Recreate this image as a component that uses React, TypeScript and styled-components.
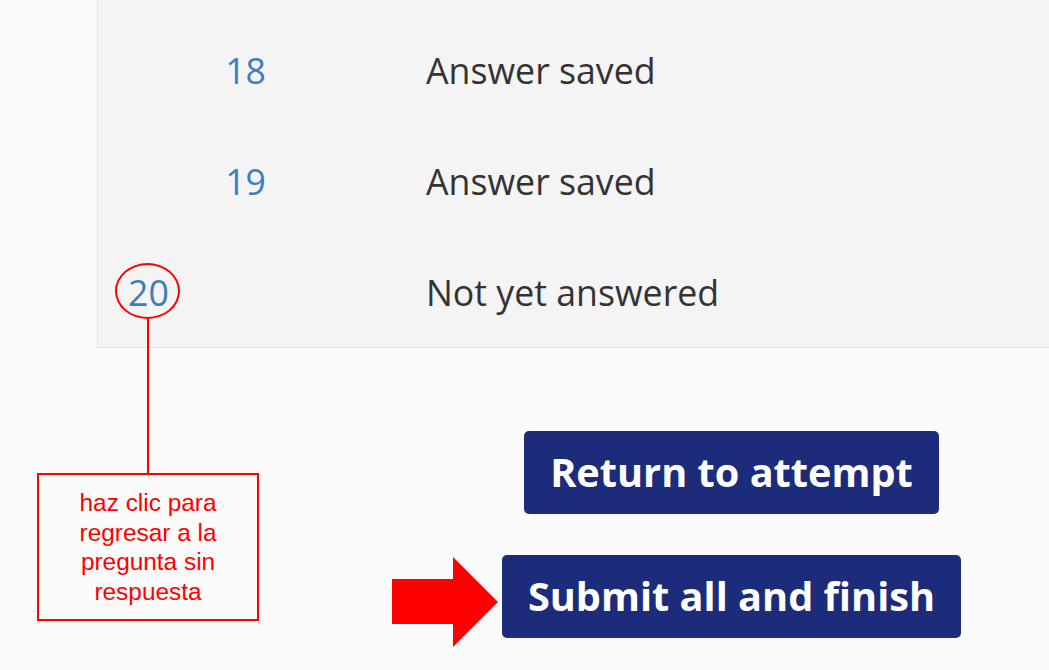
import React from "react";
import styled, { createGlobalStyle } from "styled-components";

const Global = createGlobalStyle`
  html, body { margin: 0; padding: 0; background: #fafafa; }
  body { width: 1049px; height: 670px; overflow: hidden; font-family: "Open Sans", "Noto Sans", sans-serif; }
`;

const Page = styled.div`
  position: relative;
  width: 1049px;
  height: 670px;
  background: #fafafa;
`;

const Panel = styled.div`
  margin-left: 97px;
  padding-top: 14px;
  background: #f4f4f4;
  border-left: 1px solid #e3e3e3;
  border-bottom: 1px solid #e3e3e3;
`;

const Row = styled.div`
  display: grid;
  grid-template-columns: 168px 1fr;
  column-gap: 160px;
  align-items: center;
  height: 111px;
  font-size: 35.7px;
`;

const Num = styled.a<{ $align: "left" | "right" }>`
  color: #3d7ebf;
  text-decoration: none;
  text-align: ${(p) => p.$align};
  padding-left: ${(p) => (p.$align === "left" ? "30px" : "0")};
`;

const Status = styled.span`
  color: #333333;
`;

const Actions = styled.div`
  display: flex;
  flex-direction: column;
  align-items: center;
  gap: 41px;
  margin-left: 414px;
  margin-top: 83px;
`;

const Button = styled.button`
  background: #1d2b7b;
  color: #ffffff;
  border: none;
  border-radius: 5px;
  font-family: "Open Sans", sans-serif;
  font-weight: 700;
  font-size: 39.7px;
  line-height: 57px;
  padding: 13px 26px;
  cursor: pointer;
`;

const Circle = styled.div`
  position: absolute;
  left: 115px;
  top: 263px;
  width: 61px;
  height: 52px;
  border: 2px solid #ff0000;
  border-radius: 50%;
`;

const Connector = styled.div`
  position: absolute;
  left: 147px;
  top: 318px;
  width: 2px;
  height: 156px;
  background: #ff0000;
`;

const Callout = styled.div`
  position: absolute;
  left: 37px;
  top: 473px;
  width: 218px;
  height: 144px;
  border: 2px solid #ff0000;
  display: flex;
  align-items: center;
  justify-content: center;
  text-align: center;
  color: #ff0000;
  font-family: "Liberation Sans", Arial, sans-serif;
  font-size: 24.4px;
  line-height: 29.5px;
`;

const Arrow = styled.svg`
  position: absolute;
  left: 392px;
  top: 557px;
`;

const rows = [
  { n: "18", s: "Answer saved", align: "right" as const },
  { n: "19", s: "Answer saved", align: "right" as const },
  { n: "20", s: "Not yet answered", align: "left" as const },
];

export default function App() {
  return (
    <Page>
      <Global />
      <Panel>
        {rows.map((r) => (
          <Row key={r.n}>
            <Num href="#" $align={r.align}>{r.n}</Num>
            <Status>{r.s}</Status>
          </Row>
        ))}
      </Panel>
      <Actions>
        <Button>Return to attempt</Button>
        <Button>Submit all and finish</Button>
      </Actions>
      <Circle />
      <Connector />
      <Callout>
        haz clic para
        <br />
        regresar a la
        <br />
        pregunta sin
        <br />
        respuesta
      </Callout>
      <Arrow width="107" height="90" viewBox="0 0 107 90">
        <polygon points="0,22 61,22 61,0 106,45 61,90 61,67 0,67" fill="#ff0000" />
      </Arrow>
    </Page>
  );
}
